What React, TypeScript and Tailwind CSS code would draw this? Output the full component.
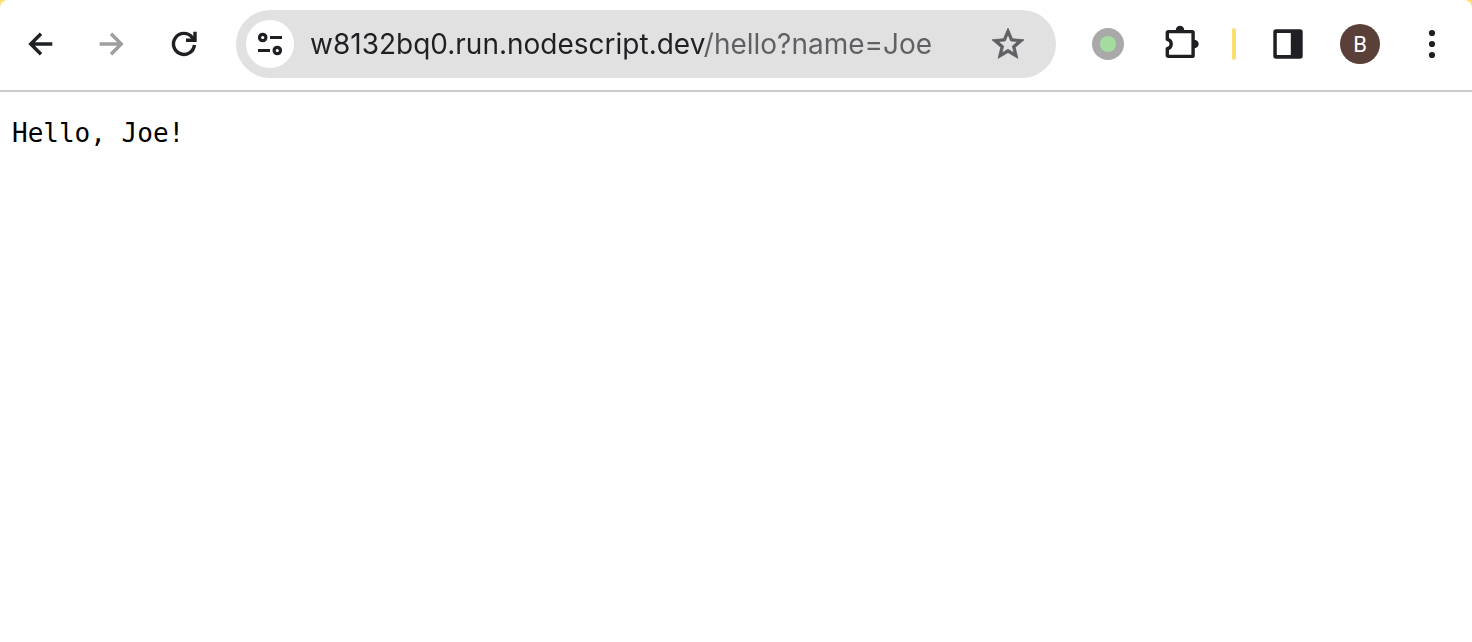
import { useState, type ReactNode } from "react";

function ToolButton({ label, disabled, children }: { label: string; disabled?: boolean; children: ReactNode }) {
  return (
    <button
      type="button"
      aria-label={label}
      disabled={disabled}
      className="flex size-14 shrink-0 items-center justify-center rounded-full text-[#1f2023] enabled:hover:bg-black/5 disabled:text-[#9e9e9e]"
    >
      {children}
    </button>
  );
}

function Icon({ children }: { children: ReactNode }) {
  return (
    <svg viewBox="0 0 40 40" className="size-10" fill="none" stroke="currentColor" strokeWidth="3.4" aria-hidden="true">
      {children}
    </svg>
  );
}

function AddressBar() {
  const [url, setUrl] = useState("w8132bq0.run.nodescript.dev/hello?name=Joe");
  return (
    <form
      onSubmit={(e) => e.preventDefault()}
      className="mx-2 flex h-17 min-w-0 flex-1 items-center rounded-full bg-[#e1e1e1] pr-6 pl-2.5"
    >
      <button
        type="button"
        aria-label="View site information"
        className="flex size-12 shrink-0 items-center justify-center rounded-full bg-white text-[#1f2023]"
      >
        <Icon>
          <g strokeWidth="3.2">
            <circle cx="12.7" cy="13.5" r="3.2" />
            <path d="M20 13.5H32M8 26.5H20" />
            <circle cx="27.3" cy="26.5" r="3.2" />
          </g>
        </Icon>
      </button>
      <input
        type="text"
        aria-label="Address and search bar"
        spellCheck={false}
        value={url}
        onChange={(e) => setUrl(e.target.value)}
        className="ml-4 h-10 min-w-0 flex-1 bg-[linear-gradient(to_right,#1f2023_395px,#5f6063_395px)] bg-clip-text font-['Inter',sans-serif] text-[28px] text-transparent caret-[#1f2023] outline-none"
      />
      <button
        type="button"
        aria-label="Bookmark this tab"
        className="flex size-12 shrink-0 items-center justify-center rounded-full text-[#5f6063]"
      >
        <svg viewBox="0 0 24 24" className="size-10" fill="currentColor" stroke="currentColor" strokeWidth="0.5" aria-hidden="true">
          <path d="M21.6 9.5l-6.9-.62L12 2.5 9.3 8.88 2.4 9.5l5.3 4.5L6.1 20.6 12 17.1 17.9 20.6l-1.6-6.6 5.3-4.5zM12 15.2l-3.6 2.17.96-4.1-3.2-2.76 4.2-.36L12 6.3l1.64 3.85 4.2.36-3.2 2.76.96 4.1L12 15.2z" />
        </svg>
      </button>
    </form>
  );
}

export default function App() {
  return (
    <div className="bg-[#fbdf70]">
      <div className="flex min-h-screen flex-col rounded-t-lg bg-white">
        <header className="flex items-center gap-4 border-b-2 border-[#cbcbcb] px-3 pt-2.5 pb-3">
          <ToolButton label="Back">
            <Icon>
              <path d="M32.3 20H11M21 9.7L10.7 20L21 30.3" />
            </Icon>
          </ToolButton>
          <ToolButton label="Forward" disabled>
            <Icon>
              <path d="M7.7 20H29M19 9.7L29.3 20L19 30.3" />
            </Icon>
          </ToolButton>
          <ToolButton label="Reload">
            <Icon>
              <path d="M30.4 21A10.5 10.5 0 1 1 28.2 13.4L30.5 16" />
              <path d="M31 7.7V16.3H22" />
            </Icon>
          </ToolButton>

          <AddressBar />

          <ToolButton label="Extension status">
            <span className="flex size-8 items-center justify-center rounded-full bg-[#a9a9a9]">
              <span className="size-4 rounded-full bg-[#a4dc9f]" />
            </span>
          </ToolButton>
          <ToolButton label="Extensions">
            <Icon>
              <path
                strokeLinejoin="round"
                d="M7.3 15.3V8.6A1 1 0 0 1 8.3 7.6H32.1A1 1 0 0 1 33.1 8.6V31.4A1 1 0 0 1 32.1 32.4H8.3A1 1 0 0 1 7.3 31.4V24.7C9.6 24.3 11.2 22.4 11.2 20S9.6 15.7 7.3 15.3Z"
                strokeWidth="0"
              />
              <path
                strokeLinejoin="round"
                d="M7.3 15.3V8.6A1 1 0 0 1 8.3 7.6H32.1A1 1 0 0 1 33.1 8.6V31.4A1 1 0 0 1 32.1 32.4H8.3A1 1 0 0 1 7.3 31.4V24.7C9.6 24.3 11.2 22.4 11.2 20S9.6 15.7 7.3 15.3Z"
              />
              <path d="M15.7 6.5a4.3 4.8 0 0 1 8.6 0zM34 15.7a4.7 4.3 0 0 1 0 8.6z" fill="currentColor" stroke="none" />
            </Icon>
          </ToolButton>

          <div className="mx-2 h-8 w-1 shrink-0 rounded-full bg-[#fbdf70]" />

          <ToolButton label="Side panel">
            <Icon>
              <path
                fillRule="evenodd"
                fill="currentColor"
                stroke="none"
                d="M8 5.3H32a2.7 2.7 0 0 1 2.7 2.7V32a2.7 2.7 0 0 1 -2.7 2.7H8A2.7 2.7 0 0 1 5.3 32V8A2.7 2.7 0 0 1 8 5.3ZM8.8 9V31H22.8V9Z"
              />
            </Icon>
          </ToolButton>
          <ToolButton label="Profile B">
            <span className="flex size-10 items-center justify-center rounded-full bg-[#5a4038] font-['Roboto',sans-serif] text-[22px] text-white">
              B
            </span>
          </ToolButton>
          <ToolButton label="Menu">
            <Icon>
              <g fill="currentColor" stroke="none">
                <circle cx="20" cy="9" r="3.1" />
                <circle cx="20" cy="20" r="3.1" />
                <circle cx="20" cy="31" r="3.1" />
              </g>
            </Icon>
          </ToolButton>
        </header>
        <main className="px-3 py-6">
          <pre className="font-['DejaVu_Sans_Mono',monospace] text-[26px] leading-[34px] text-black">Hello, Joe!</pre>
        </main>
      </div>
    </div>
  );
}
